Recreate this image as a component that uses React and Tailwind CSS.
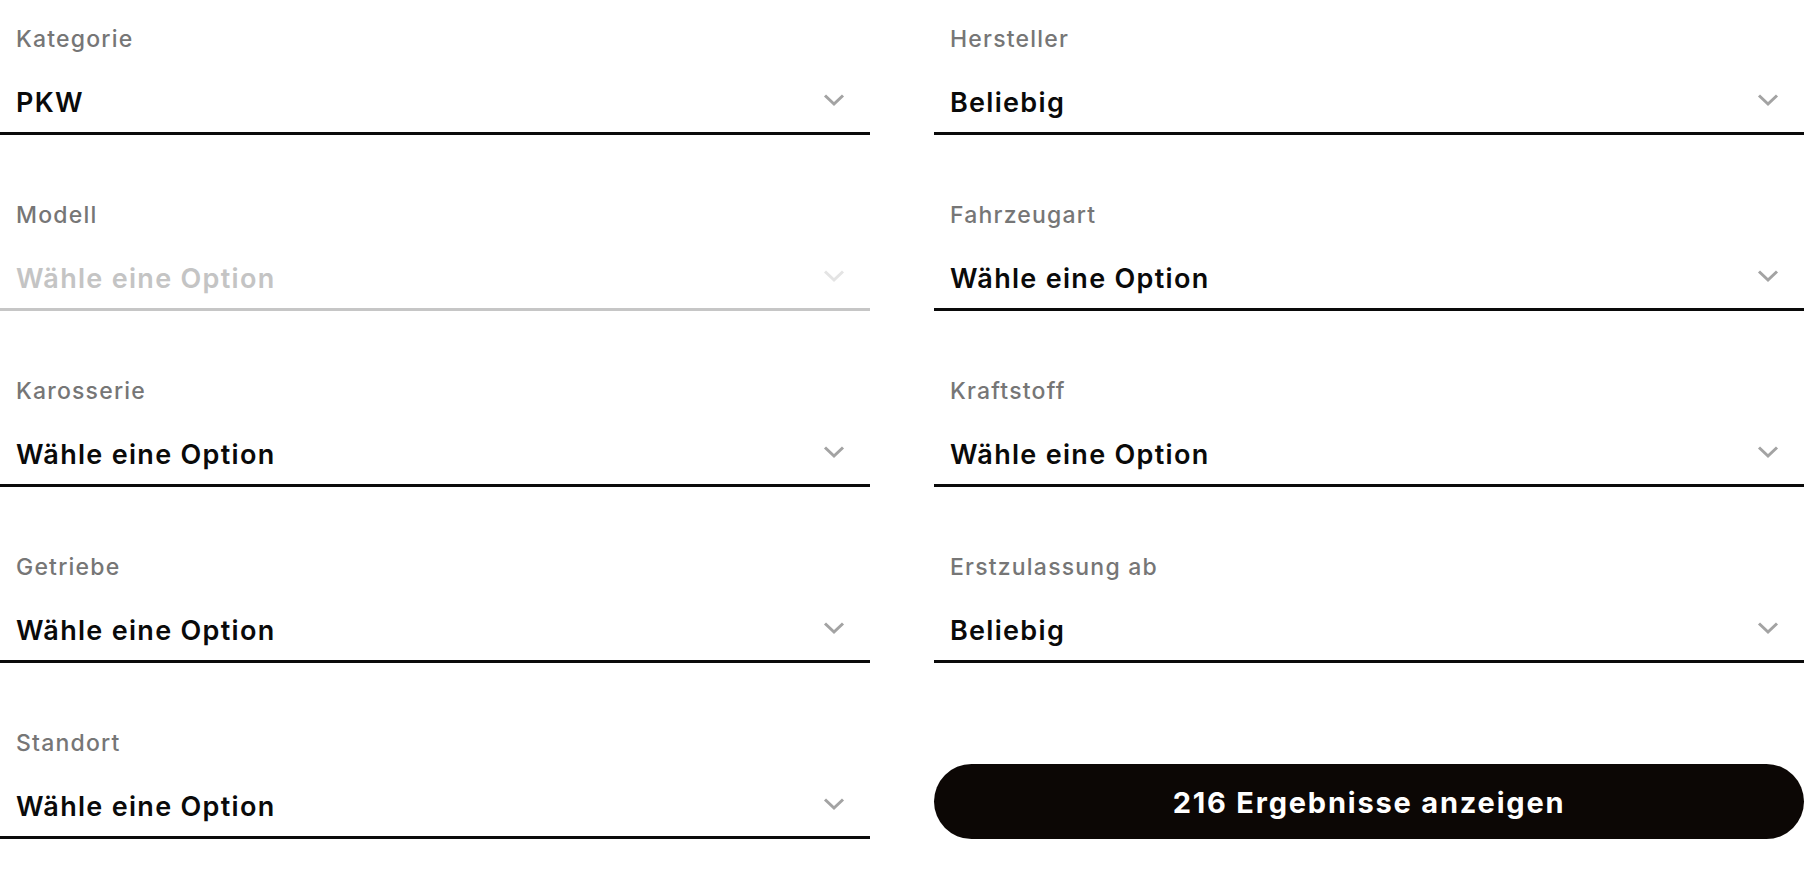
import React from 'react';

const FIELDS = [
    { label: 'Kategorie', value: 'PKW' },
    { label: 'Hersteller', value: 'Beliebig' },
    { label: 'Modell', value: 'Wähle eine Option', disabled: true },
    { label: 'Fahrzeugart', value: 'Wähle eine Option' },
    { label: 'Karosserie', value: 'Wähle eine Option' },
    { label: 'Kraftstoff', value: 'Wähle eine Option' },
    { label: 'Getriebe', value: 'Wähle eine Option' },
    { label: 'Erstzulassung ab', value: 'Beliebig' },
    { label: 'Standort', value: 'Wähle eine Option' },
];

const Chevron = ({ disabled }) => (
    <svg
        width="22"
        height="14"
        viewBox="0 0 22 14"
        className={disabled ? 'mr-[25px] mb-[6px] text-[#e4e4e4]' : 'mr-[25px] mb-[6px] text-[#a3a3a3]'}
    >
        <path d="M2 2.5 L11 11 L20 2.5" fill="none" stroke="currentColor" strokeWidth="3" />
    </svg>
);

const SelectField = ({ label, value, disabled }) => (
    <div className="h-[176px] pt-[25px]">
        <div className="pl-4 text-[23px] leading-[28px] font-medium text-[#767676] tracking-[1.2px]">
            {label}
        </div>
        <div
            className={
                disabled
                    ? 'mt-[32px] flex items-center justify-between pl-4 pb-[11px] border-b-[3px] border-[#c6c6c6]'
                    : 'mt-[32px] flex items-center justify-between pl-4 pb-[11px] border-b-[3px] border-[#0a0a0a]'
            }
        >
            <span
                className={
                    disabled
                        ? 'text-[27px] leading-[36px] font-semibold tracking-[1.3px] text-[#c4c4c4]'
                        : 'text-[27px] leading-[36px] font-semibold tracking-[1.3px] text-[#0a0a0a]'
                }
            >
                {value}
            </span>
            <Chevron disabled={disabled} />
        </div>
    </div>
);

export default function App() {
    return (
        <div className="min-h-[880px] bg-white font-['Inter','Noto_Sans',sans-serif]">
            <div className="grid grid-cols-[870px_870px] gap-x-16">
                {FIELDS.map((f) => (
                    <SelectField key={f.label} {...f} />
                ))}
                <div className="h-[176px] pt-[60px]">
                    <button
                        type="button"
                        className="w-full h-[75px] pt-[3px] rounded-full bg-[#0c0705] text-white text-[29px] font-bold tracking-[1.8px]"
                    >
                        216 Ergebnisse anzeigen
                    </button>
                </div>
            </div>
        </div>
    );
}
